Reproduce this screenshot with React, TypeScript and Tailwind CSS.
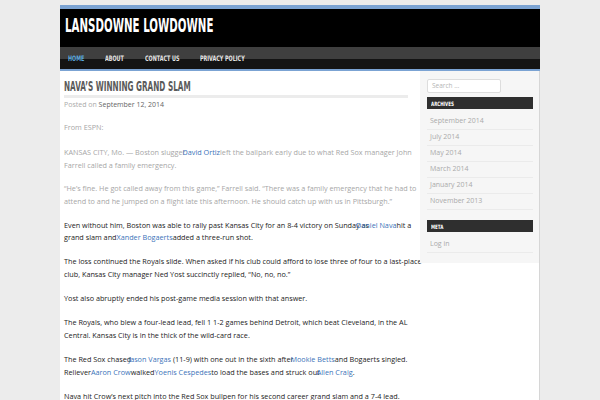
import React from "react";

const cond = { fontFamily: '"DejaVu Sans Condensed", "DejaVu Sans", sans-serif' };

function L({ children, ml = "-ml-[3px]" }: { children: React.ReactNode; ml?: string }) {
  return <span className={`text-[#3b73b9] ${ml}`}>{children}</span>;
}

function NavItem({ w, color, children }: { w: string; color: string; children: React.ReactNode }) {
  return (
    <div className={`${w} shrink-0`}>
      <div className={`block w-max origin-left scale-x-[0.72] ${color}`}>{children}</div>
    </div>
  );
}

export default function App() {
  const body = { fontFamily: '"Open Sans", "DejaVu Sans", sans-serif' };
  return (
    <div className="min-h-[400px] w-[600px] overflow-hidden bg-[#ececec] pt-[5px]">
      <div className="mx-auto w-[480px]">
        <div className="h-[4px] bg-[#7ba3d3]" />
        <div className="h-[38px] bg-black pl-[5px] pt-[4px]">
          <div
            className="block w-max origin-left scale-x-[0.6] text-[19px] font-bold leading-[24px] text-white"
            style={cond}
          >
            LANSDOWNE LOWDOWNE
          </div>
        </div>
        <div className="relative h-[22px] bg-[#141414]">
          <div className="h-[12px] bg-[#3f3f3f]" />
          <div
            className="absolute inset-0 flex items-center pl-[8px] pt-[1px] text-[7.5px] font-bold leading-[10px]"
            style={cond}
          >
            <NavItem w="w-[37px]" color="text-[#5aa7dc]">HOME</NavItem>
            <NavItem w="w-[40px]" color="text-[#e4e4e4]">ABOUT</NavItem>
            <NavItem w="w-[55px]" color="text-[#e4e4e4]">CONTACT US</NavItem>
            <NavItem w="w-[60px]" color="text-[#e4e4e4]">PRIVACY POLICY</NavItem>
          </div>
        </div>
        <div className="h-[2px] bg-[#7ba3d3]" />
        <div className="flex min-h-[330px] items-start border-r border-[#d6d6d6] bg-white">
          <div className="w-[360px] shrink-0 pl-[4px]" style={body}>
            <div className="pt-[7px]">
              <div className="flex h-[16px] items-center">
                <div
                  className="block w-max origin-left scale-x-[0.6] whitespace-nowrap text-[13.5px] font-bold leading-[16px] text-[#5a5a5a]"
                  style={cond}
                >
                  NAVA’S WINNING GRAND SLAM
                </div>
              </div>
              <div className="mt-[1px] h-[3px] w-[344px] bg-[#ececec]" />
            </div>
            <div className="mt-[1px] text-[7px] leading-[12px] text-[#aaaaaa]">
              Posted on <span className="text-[#666]">September 12, 2014</span>
            </div>
            <div className="mt-[10px] whitespace-nowrap text-[7.25px] leading-[12.5px]">
              <p className="mb-[12.5px] text-[#a6a6a6]">From ESPN:</p>
              <p className="mb-[11px] text-[#a6a6a6]">
                KANSAS CITY, Mo. — Boston slugger<L>David Ortiz</L>left the ballpark early due to what Red Sox manager John
                <br />
                Farrell called a family emergency.
              </p>
              <p className="mb-[11.5px] text-[#a6a6a6]">
                “He’s fine. He got called away from this game,” Farrell said. “There was a family emergency that he had to
                <br />
                attend to and he jumped on a flight late this afternoon. He should catch up with us in Pittsburgh.”
              </p>
              <p className="mb-[11.5px] text-[#222]">
                Even without him, Boston was able to rally past Kansas City for an 8-4 victory on Sunday as<L ml="-ml-[13px]">Daniel Nava</L>hit a
                <br />
                grand slam and<L ml="ml-0">Xander Bogaerts</L>added a three-run shot.
              </p>
              <p className="mb-[11.5px] text-[#222]">
                The loss continued the Royals slide. When asked if his club could afford to lose three of four to a last-place
                <br />
                club, Kansas City manager Ned Yost succinctly replied, “No, no, no.”
              </p>
              <p className="mb-[12px] text-[#222]">Yost also abruptly ended his post-game media session with that answer.</p>
              <p className="mb-[12px] text-[#222]">
                The Royals, who blew a four-lead lead, fell 1 1-2 games behind Detroit, which beat Cleveland, in the AL
                <br />
                Central. Kansas City is in the thick of the wild-card race.
              </p>
              <p className="mb-[12px] text-[#222]">
                The Red Sox chased<L>Jason Vargas</L> (11-9) with one out in the sixth after<L>Mookie Betts</L>and Bogaerts singled.
                <br />
                Reliever<L ml="ml-0">Aaron Crow</L>walked<L ml="ml-0">Yoenis Cespedes</L>to load the bases and struck out<L>Allen Craig</L>.
              </p>
              <p className="text-[#222]">
                Nava hit Crow’s next pitch into the Red Sox bullpen for his second career grand slam and a 7-4 lead.
              </p>
            </div>
          </div>
          <div className="relative z-10 w-[119px] shrink-0 bg-[#f6f6f6] pb-[10px] pl-[7px] pr-[6px] pt-[8px]" style={body}>
            <div className="flex h-[14px] w-[74px] items-center rounded-[2px] border border-[#dddddd] bg-white pl-[4px] text-[6.5px] text-[#b5b5b5]">
              Search …
            </div>
            <div className="mt-[4px] flex h-[12px] items-center bg-[#2f2f2f] pl-[4px]" style={cond}>
              <div className="block w-max origin-left scale-x-[0.75] text-[6px] font-bold text-white">ARCHIVES</div>
            </div>
            <div className="mt-[5px] text-[7px] text-[#aaaaaa]">
              {["September 2014", "July 2014", "May 2014", "March 2014", "January 2014", "November 2013"].map((m) => (
                <div key={m} className="flex h-[16px] items-center border-b border-[#ebebeb] pl-[3px]">
                  {m}
                </div>
              ))}
            </div>
            <div className="mt-[10px] flex h-[12px] items-center bg-[#2f2f2f] pl-[4px]" style={cond}>
              <div className="block w-max origin-left scale-x-[0.75] text-[6px] font-bold text-white">META</div>
            </div>
            <div className="mt-[5px] flex h-[16px] items-center border-b border-[#ebebeb] pl-[3px] text-[7px] text-[#aaaaaa]">
              Log in
            </div>
          </div>
        </div>
      </div>
    </div>
  );
}
